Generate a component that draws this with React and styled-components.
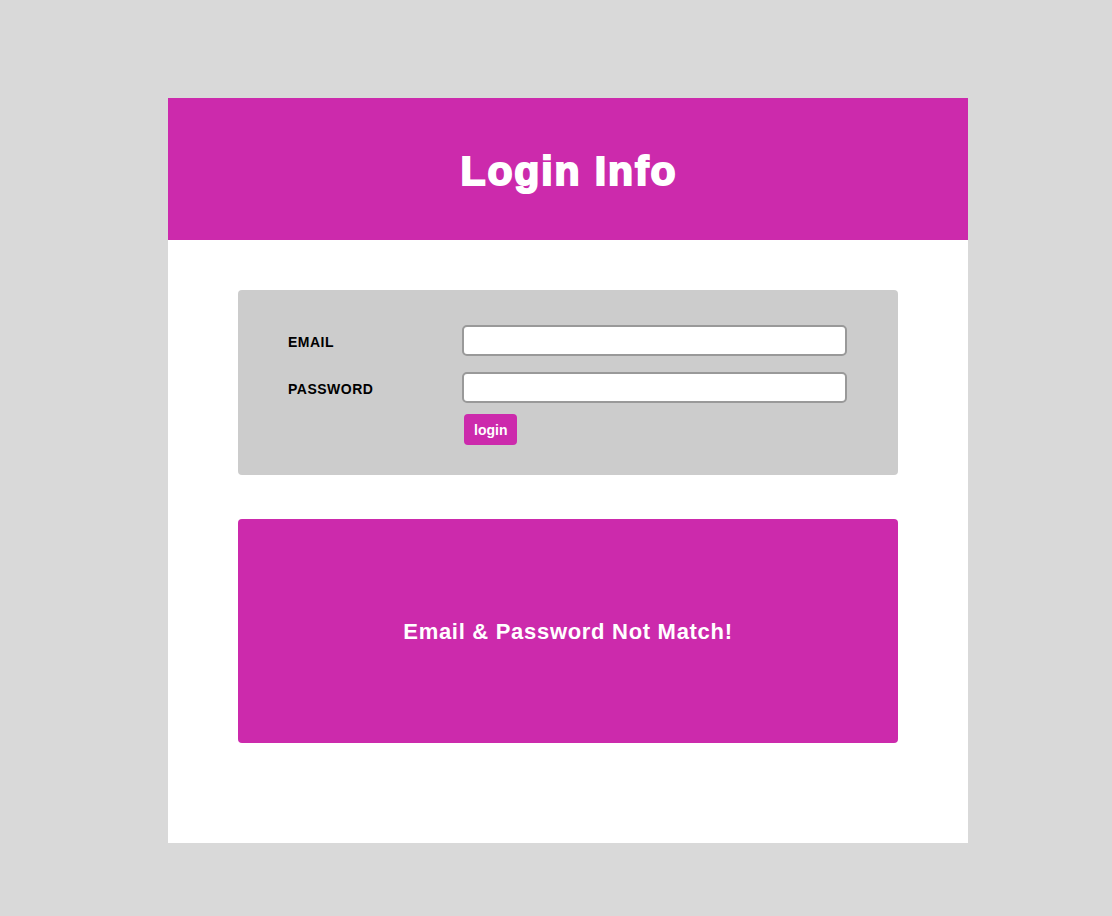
import React, { useState } from "react";
import styled, { createGlobalStyle } from "styled-components";

const GlobalStyle = createGlobalStyle`
  html, body {
    margin: 0;
    padding: 0;
    background: #d9d9d9;
    font-family: "Liberation Sans", Arial, sans-serif;
  }
`;

const MAGENTA = "#cc2aac";

const Page = styled.div`
  padding: 98px 0 73px 168px;
`;

const Card = styled.div`
  width: 800px;
  background: #ffffff;
  padding-bottom: 100px;
`;

const Header = styled.header`
  height: 142px;
  background: ${MAGENTA};
  display: flex;
  align-items: center;
  justify-content: center;
`;

const Title = styled.h1`
  margin: 0;
  color: #ffffff;
  font-size: 41px;
  font-weight: 700;
  letter-spacing: 1.9px;
  -webkit-text-stroke: 2px #ffffff;
  padding-top: 4px;
  padding-left: 2px;
`;

const Body = styled.div`
  padding: 50px 70px 0;
  display: flex;
  flex-direction: column;
  gap: 44px;
`;

const FormBox = styled.form`
  background: #cccccc;
  border-radius: 4px;
  padding: 35px 50px 30px;
  display: flex;
  flex-direction: column;
  gap: 16px;
`;

const Row = styled.div`
  display: grid;
  grid-template-columns: 174px 385px;
  align-items: center;
`;

const Label = styled.label`
  font-size: 14px;
  font-weight: 700;
  letter-spacing: 0.5px;
  color: #000000;
  padding-top: 2px;
`;

const Input = styled.input.attrs(props => ({
  type: props.type || "text"
}))`
  box-sizing: border-box;
  width: 385px;
  height: 31px;
  border: 2px solid #999999;
  border-radius: 5px;
  background: #ffffff;
  padding: 0 8px;
  font-size: 14px;
  outline: none;
`;

const ButtonRow = styled(Row)`
  margin-top: -5px;
`;

const LoginButton = styled.button`
  justify-self: start;
  margin-left: 2px;
  height: 31px;
  padding: 0 10px;
  border: none;
  border-radius: 4px;
  background: ${MAGENTA};
  color: #ffffff;
  font-family: "Liberation Sans", Arial, sans-serif;
  font-size: 14px;
  font-weight: 700;
  cursor: pointer;
`;

const Message = styled.div`
  height: 224px;
  border-radius: 4px;
  background: ${MAGENTA};
  display: flex;
  align-items: center;
  justify-content: center;
  color: #ffffff;
  font-size: 22px;
  font-weight: 700;
  letter-spacing: 0.7px;
  padding-top: 2px;
  box-sizing: border-box;
`;

const App = () => {
  const [email, setEmail] = useState("");
  const [password, setPassword] = useState("");

  const submit = e => {
    e.preventDefault();
  };

  return (
    <>
      <GlobalStyle />
      <Page>
        <Card>
          <Header>
            <Title>Login Info</Title>
          </Header>
          <Body>
            <FormBox onSubmit={submit}>
              <Row>
                <Label>EMAIL</Label>
                <Input value={email} onChange={e => setEmail(e.target.value)} />
              </Row>
              <Row>
                <Label>PASSWORD</Label>
                <Input
                  type="password"
                  value={password}
                  onChange={e => setPassword(e.target.value)}
                />
              </Row>
              <ButtonRow>
                <span />
                <LoginButton type="submit">login</LoginButton>
              </ButtonRow>
            </FormBox>
            <Message>Email &amp; Password Not Match!</Message>
          </Body>
        </Card>
      </Page>
    </>
  );
};

export default App;
